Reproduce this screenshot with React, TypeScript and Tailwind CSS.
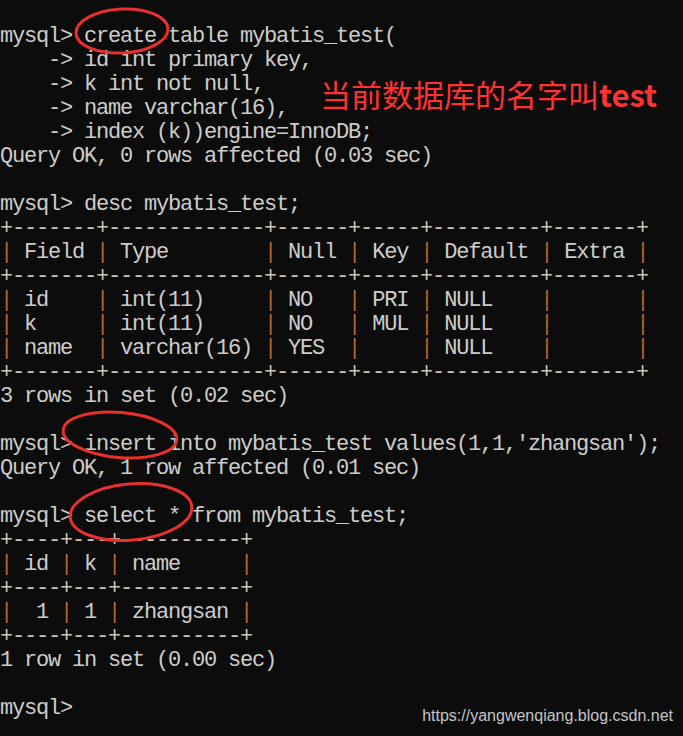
import React from "react";

type Line = { text: string; table?: boolean };

const lines: Line[] = [
  { text: "mysql> create table mybatis_test(" },
  { text: "    -> id int primary key," },
  { text: "    -> k int not null," },
  { text: "    -> name varchar(16)," },
  { text: "    -> index (k))engine=InnoDB;" },
  { text: "Query OK, 0 rows affected (0.03 sec)" },
  { text: "" },
  { text: "mysql> desc mybatis_test;" },
  { text: "+-------+-------------+------+-----+---------+-------+", table: true },
  { text: "| Field | Type        | Null | Key | Default | Extra |", table: true },
  { text: "+-------+-------------+------+-----+---------+-------+", table: true },
  { text: "| id    | int(11)     | NO   | PRI | NULL    |       |", table: true },
  { text: "| k     | int(11)     | NO   | MUL | NULL    |       |", table: true },
  { text: "| name  | varchar(16) | YES  |     | NULL    |       |", table: true },
  { text: "+-------+-------------+------+-----+---------+-------+", table: true },
  { text: "3 rows in set (0.02 sec)" },
  { text: "" },
  { text: "mysql> insert into mybatis_test values(1,1,'zhangsan');" },
  { text: "Query OK, 1 row affected (0.01 sec)" },
  { text: "" },
  { text: "mysql> select * from mybatis_test;" },
  { text: "+----+---+----------+", table: true },
  { text: "| id | k | name     |", table: true },
  { text: "+----+---+----------+", table: true },
  { text: "|  1 | 1 | zhangsan |", table: true },
  { text: "+----+---+----------+", table: true },
  { text: "1 row in set (0.00 sec)" },
  { text: "" },
  { text: "mysql>" },
];

function kind(c: string): "pipe" | "border" | "text" {
  if (c === "|") return "pipe";
  if (c === "+" || c === "-") return "border";
  return "text";
}

function TableLine({ text }: { text: string }) {
  const groups: { k: string; s: string }[] = [];
  for (const c of text) {
    const k = kind(c);
    const last = groups[groups.length - 1];
    if (last && last.k === k) last.s += c;
    else groups.push({ k, s: c });
  }
  return (
    <>
      {groups.map((g, i) =>
        g.k === "pipe" ? (
          <span key={i} className="text-[#b3652e]">{g.s}</span>
        ) : g.k === "border" ? (
          <span key={i} className="text-[#c9c2b8]">{g.s}</span>
        ) : (
          <span key={i}>{g.s}</span>
        )
      )}
    </>
  );
}

export default function App() {
  return (
    <div className="relative w-[683px] h-[736px] overflow-hidden bg-[#0c0c0c]">
      <div className="flex flex-col pt-[25px] font-['Liberation_Mono',monospace] text-[22px] tracking-[-1.2px] leading-[24px] text-[#cccccc]">
        {lines.map((l, i) => (
          <div key={i} className="h-[24px] whitespace-pre">
            {l.table ? <TableLine text={l.text} /> : l.text}
          </div>
        ))}
      </div>

      <div className="absolute left-[320px] top-[79px] whitespace-nowrap font-['Noto_Sans_CJK_SC',sans-serif] text-[31px] leading-[30px] text-[#ff3232]">
        当前数据库的名字叫<span className="font-bold">test</span>
      </div>

      <svg
        className="absolute left-0 top-0 pointer-events-none"
        width="683"
        height="736"
        viewBox="0 0 683 736"
      >
        <ellipse cx="122" cy="31" rx="46" ry="22" fill="none" stroke="#e8302c" strokeWidth="3" transform="rotate(-3 122 31)" />
        <ellipse cx="120" cy="435" rx="57" ry="22.5" fill="none" stroke="#e8302c" strokeWidth="3" transform="rotate(5 120 435)" />
        <ellipse cx="131" cy="512" rx="61" ry="28" fill="none" stroke="#e8302c" strokeWidth="3" transform="rotate(-5 131 512)" />
      </svg>

      <div className="absolute right-[10px] top-[708px] whitespace-nowrap font-['Liberation_Sans',Arial,sans-serif] text-[16px] leading-[16px] text-[#c4c4c4]">
        https://yangwenqiang.blog.csdn.net
      </div>
    </div>
  );
}
